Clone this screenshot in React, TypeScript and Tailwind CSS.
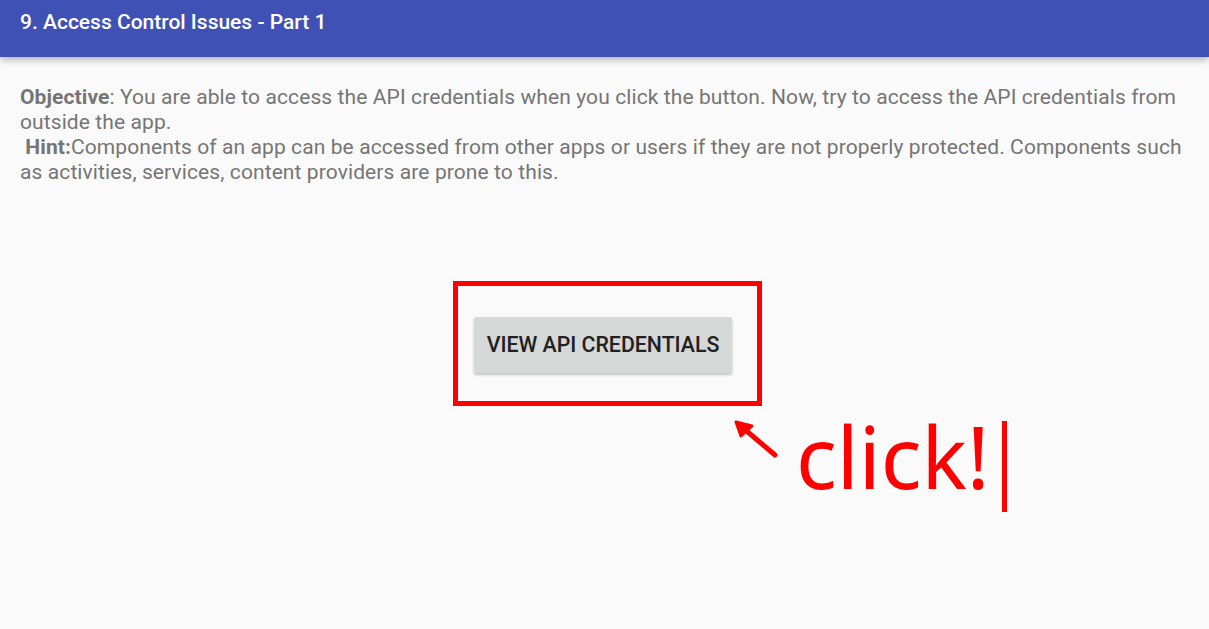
export default function App() {
  return (
    <div className="relative h-[629px] w-[1209px] overflow-hidden bg-[#fafafa] font-['Roboto',sans-serif]">
      <header className="relative z-10 flex h-[57px] items-start bg-[#3f51b5] px-5 pt-[9px] shadow-[0_2px_8px_rgba(0,0,0,0.35)]">
        <h1 className="text-[21px] font-medium leading-[26px] text-white">
          9. Access Control Issues - Part 1
        </h1>
      </header>

      <main className="pl-5 pr-[18px] pt-[28px]">
        <div className="text-[21px] leading-[25px] tracking-[0.1px] text-[#757575]">
          <p>
            <span className="font-bold">Objective</span>: You are able to access the API credentials when
            you click the button. Now, try to access the API credentials from outside the app.
          </p>
          <p>
            &nbsp;<span className="font-bold">Hint:</span>Components of an app can be accessed from
            other apps or users if they are not properly protected. Components such as activities,
            services, content providers are prone to this.
          </p>
        </div>

        <div className="flex justify-center pt-[132px] pr-[5px]">
          <button className="h-[56px] w-[258px] rounded-[2px] bg-[#d6d7d7] text-[21.3px] font-medium text-[#212121] shadow-[0_2px_3px_rgba(0,0,0,0.22)]">
            VIEW API CREDENTIALS
          </button>
        </div>
      </main>

      {/* annotation overlay */}
      <div className="absolute left-[453px] top-[281px] h-[125px] w-[309px] border-[5px] border-[#ff0000]" />
      <svg className="absolute left-[728px] top-[414px]" width="56" height="50" viewBox="0 0 56 50">
        <line x1="47" y1="41" x2="14" y2="13" stroke="#ff0000" strokeWidth="5" strokeLinecap="round" />
        <polygon points="8,8 24,12 13,22" fill="#ff0000" stroke="#ff0000" strokeWidth="3" strokeLinejoin="round" />
      </svg>
      <div className="absolute left-[796px] top-[396px] flex items-start">
        <span className="font-['Noto_Sans',sans-serif] text-[85px] font-normal leading-[120px] text-[#ff0000]">
          click!
        </span>
      </div>
      <div className="absolute left-[1002px] top-[421px] h-[91px] w-[5px] bg-[#ff0000]" />
    </div>
  );
}
